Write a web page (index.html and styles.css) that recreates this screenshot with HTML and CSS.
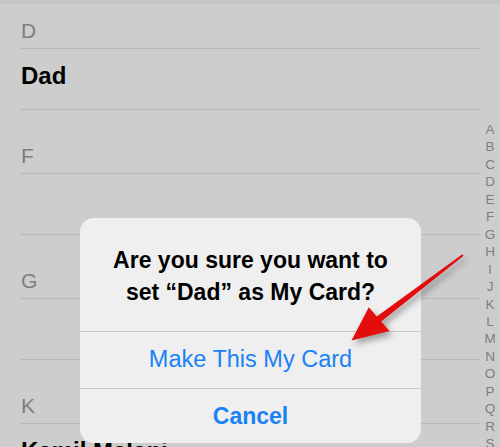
FILE: index.html
```html
<!DOCTYPE html>
<html>
<head>
    <meta charset="utf-8" />
    <meta name="viewport" content="width=device-width, initial-scale=1">
    <title>Contacts - My Card</title>
    <link rel="stylesheet" href="styles.css">
</head>
<body>
    <div id="screen">
        <div class="top-strip"></div>
        <div class="content">
            <ul class="contact-list">
                <li class="section-head first">D</li>
                <li class="contact">Dad</li>
                <li class="section-head">F</li>
                <li class="contact"></li>
                <li class="section-head">G</li>
                <li class="contact"></li>
                <li class="section-head">K</li>
                <li class="contact">Kamil Malani</li>
            </ul>
            <ul class="index-bar">
                <li>A</li><li>B</li><li>C</li><li>D</li><li>E</li><li>F</li>
                <li>G</li><li>H</li><li>I</li><li>J</li><li>K</li><li>L</li>
                <li>M</li><li>N</li><li>O</li><li>P</li><li>Q</li><li>R</li>
                <li>S</li>
            </ul>
        </div>

        <!-- alert sheet -->
        <div class="alert">
            <div class="alert-title">Are you sure you want to set &ldquo;Dad&rdquo; as My Card?</div>
            <div class="alert-button">Make This My Card</div>
            <div class="alert-button cancel">Cancel</div>
        </div>

        <!-- annotation arrow -->
        <svg class="arrow" width="500" height="447" viewBox="0 0 500 447">
            <defs>
                <filter id="shadow" x="-20%" y="-20%" width="140%" height="140%">
                    <feDropShadow dx="3" dy="4" stdDeviation="3" flood-color="#000" flood-opacity="0.35" />
                </filter>
            </defs>
            <polygon filter="url(#shadow)" fill="#e30a0a"
                points="462.4,254.2 463.6,255.8 381.2,321.6 389.5,331 351.5,340.5 368.8,307.2 376.8,316.4" />
        </svg>
    </div>
</body>
</html>
```

FILE: styles.css
```css
*, *:before, *:after{
    box-sizing:border-box;
}
html, body{
    margin:0;
    padding:0;
}
body{
    font-family:'Liberation Sans', Arial, sans-serif;
    background-color:#cdcdcd;
    color:#000;
    -webkit-font-smoothing:antialiased;
}
#screen{
    position:relative;
    width:500px;
    height:447px;
    overflow:hidden;
    background:#cdcdcd;
}
.top-strip{
    height:4px;
    background:#c6c6c6;
}
.content{
    display:flex;
}
ul{
    margin:0;
    padding:0;
    list-style:none;
}
.contact-list{
    flex:1;
    padding-left:20px;
}
.section-head{
    display:flex;
    align-items:flex-end;
    height:64.5px;
    padding-bottom:7px;
    padding-left:1px;
    font-size:21px;
    line-height:20px;
    color:#7e7e7e;
    border-bottom:1px solid #b9b9b9;
}
    .section-head.first{
        height:45px;
    }
.contact{
    display:flex;
    align-items:center;
    height:60.5px;
    padding-bottom:6px;
    padding-left:1px;
    font-size:24px;
    line-height:24px;
    font-weight:bold;
    border-bottom:1px solid #b9b9b9;
}
.index-bar{
    width:20px;
    padding-top:117px;
    font-size:13.5px;
    line-height:17.45px;
    text-align:center;
    color:#7e7e7e;
}
.alert{
    position:absolute;
    left:80px;
    top:218px;
    width:341px;
    height:225px;
    background:#efefef;
    border-radius:14px;
    display:flex;
    flex-direction:column;
    overflow:hidden;
}
.alert-title{
    padding:26px 20px 23px;
    font-size:23px;
    line-height:32px;
    font-weight:bold;
    text-align:center;
    border-bottom:1px solid #c9c9c9;
}
.alert-button{
    display:flex;
    align-items:center;
    justify-content:center;
    height:57px;
    padding-bottom:2px;
    font-size:23.5px;
    line-height:24px;
    color:#1a82f5;
    border-bottom:1px solid #c9c9c9;
}
    .alert-button.cancel{
        flex:1;
        font-size:23px;
        font-weight:bold;
        border-bottom:none;
        padding-bottom:0;
    }
.arrow{
    position:absolute;
    left:0;
    top:0;
}
```
